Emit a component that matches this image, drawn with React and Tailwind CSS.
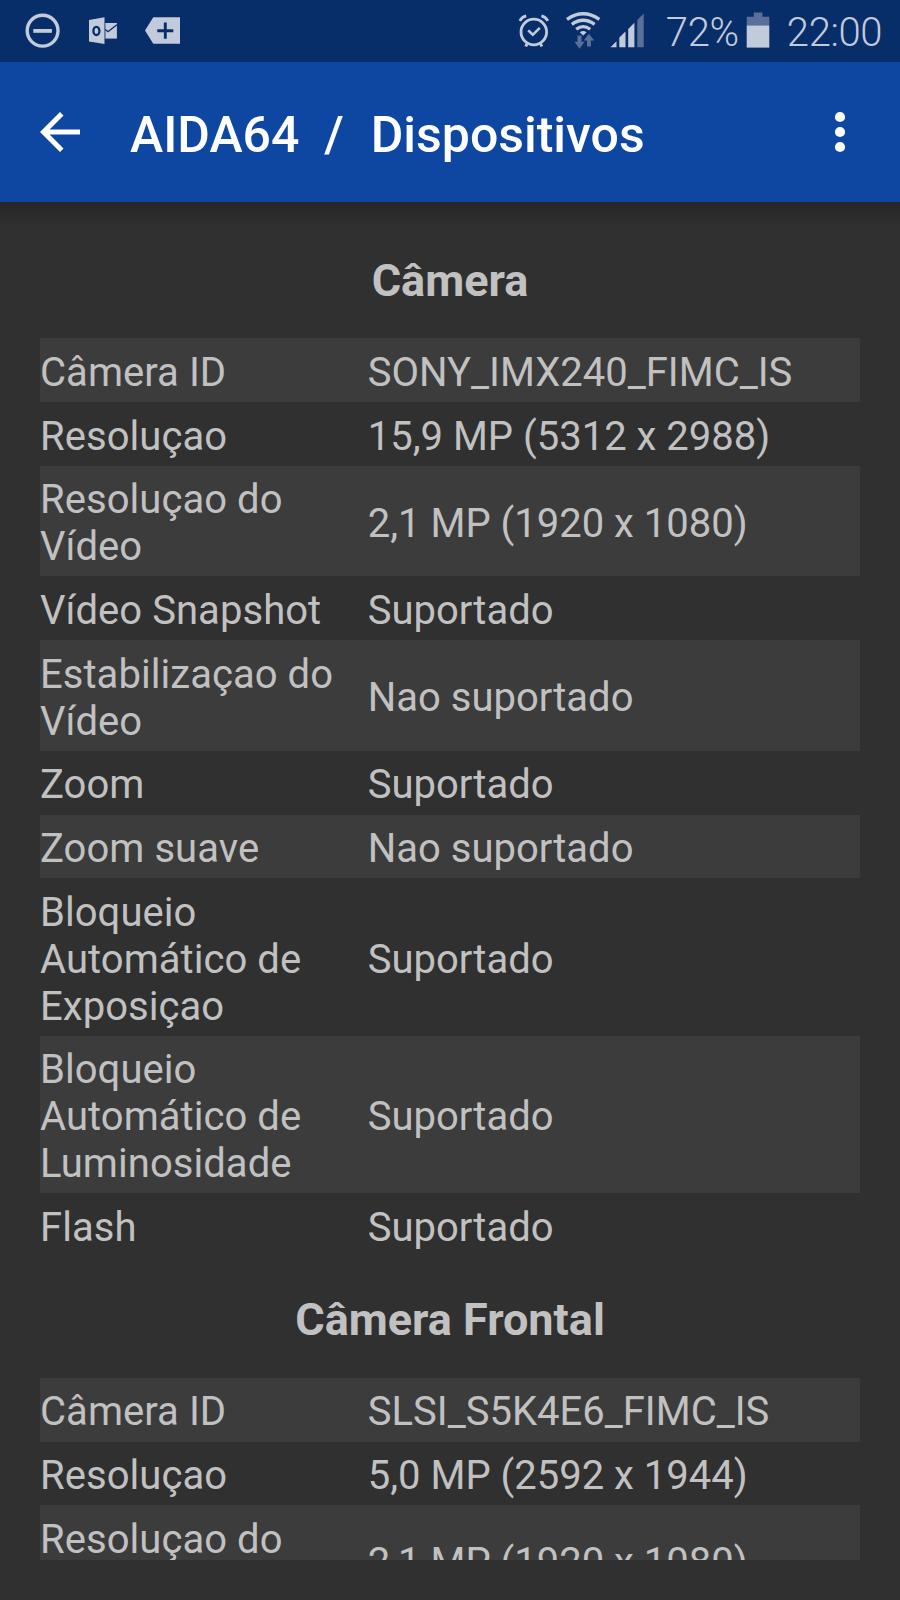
const sections = [
  {
    title: "Câmera",
    heading: "h-[112px] pt-[28.6px]",
    rows: [
      ["Câmera ID", "SONY_IMX240_FIMC_IS"],
      ["Resoluçao", "15,9 MP (5312 x 2988)"],
      ["Resoluçao do Vídeo", "2,1 MP (1920 x 1080)"],
      ["Vídeo Snapshot", "Suportado"],
      ["Estabilizaçao do Vídeo", "Nao suportado"],
      ["Zoom", "Suportado"],
      ["Zoom suave", "Nao suportado"],
      ["Bloqueio Automático de Exposiçao", "Suportado"],
      ["Bloqueio Automático de Luminosidade", "Suportado"],
      ["Flash", "Suportado"],
    ],
  },
  {
    title: "Câmera Frontal",
    heading: "h-[120.8px] pt-[37px]",
    rows: [
      ["Câmera ID", "SLSI_S5K4E6_FIMC_IS"],
      ["Resoluçao", "5,0 MP (2592 x 1944)"],
      ["Resoluçao do Vídeo", "2,1 MP (1920 x 1080)"],
    ],
  },
];

const NotificationIcons = () => (
  <svg width="200" height="62" viewBox="0 0 200 62" className="shrink-0">
    {/* do not disturb */}
    <circle cx="42.6" cy="30.7" r="15.4" fill="none" stroke="#c2cbdb" strokeWidth="3.4" />
    <rect x="33.3" y="29" width="18.6" height="3.8" fill="#c2cbdb" />

    {/* outlook */}
    <path d="M89 20l15.5-2.8v26.8L89 41.4z" fill="#c2cbdb" />
    <ellipse cx="96.4" cy="30.9" rx="3" ry="4.1" fill="none" stroke="#082e69" strokeWidth="2.3" />
    <path d="M105.4 23h11.5v15.6h-11.5z" fill="#c2cbdb" />
    <path d="M105.4 29.5l2.6 2.2 8.9-6.9" fill="none" stroke="#082e69" strokeWidth="1.4" />

    {/* tag with plus */}
    <path d="M153.3 17.3H180v26.5h-26.7L145 30.6z" fill="#c2cbdb" />
    <path d="M157.3 30.7h16M165.3 22.5v16.3" fill="none" stroke="#082e69" strokeWidth="2.9" />
  </svg>
);

const SystemIcons = () => (
  <svg width="130" height="62" viewBox="516 0 130 62" className="shrink-0">
    {/* alarm */}
    <g fill="none" stroke="#c2cbdb">
      <circle cx="533.8" cy="32" r="12.8" strokeWidth="2.8" />
      <path d="M519.8 20.9q2-4 6.4-5M547.8 20.9q-2-4-6.4-5" strokeWidth="2.8" />
      <path d="M527.6 42.5l-1.8 4M540 42.5l1.8 4" strokeWidth="3" />
      <path d="M528.2 30.4l4.6 4.4 7-7" strokeWidth="2.6" />
    </g>

    {/* wifi */}
    <g fill="none" stroke="#c2cbdb" strokeWidth="3.3">
      <path d="M567 19.3Q583.2 8.2 599.4 19.3" />
      <path d="M571.8 24.4Q583.2 16.2 594.6 24.4" />
      <path d="M576.2 29.2Q583.2 24 590.2 29.2" />
    </g>
    <path d="M579.8 32.2q3.4-2.4 6.8 0l-3.4 3.4z" fill="#c2cbdb" />
    <path d="M577.5 35.5h4v6.3h3l-5 7-5-7h3z" fill="#5a7099" />
    <path d="M587 46.5v-6h-3.2l5.1-6.8 5.3 6.8h-3.3v6z" fill="#5a7099" />

    {/* signal */}
    <path d="M610.5 47.3l6-6v6zM619.3 47.3v-9.7l6.2-6v15.7zM628.2 47.3V29l6.2-6.2v24.5z" fill="#c2cbdb" />
    <path d="M637.3 47.3V20l6.4-6.6v33.9z" fill="#5a7099" />
  </svg>
);

const BatteryIcon = () => (
  <svg width="24" height="62" viewBox="0 0 24 62" className="ml-[7px] shrink-0">
    <path d="M.7 26v-9.2h7.1v-4.3h8.6v4.3h6.9V26z" fill="#5a7099" />
    <path d="M.7 25.6h22.6v22H.7z" fill="#c2cbdb" />
  </svg>
);

const StatusBar = () => (
  <div className="flex h-[62.4px] shrink-0 items-center justify-between bg-[#082e69]">
    <NotificationIcons />
    <div className="flex items-center pr-[18px] text-[40px] leading-[60px] font-light text-[#c2cbdb]">
      <SystemIcons />
      <span className="ml-[20px] pt-[4px] tracking-[-0.3px]">72%</span>
      <BatteryIcon />
      <span className="ml-[17px] pt-[4px] tracking-[-0.4px]">22:00</span>
    </div>
  </div>
);

const Toolbar = () => (
  <div className="flex h-[140px] shrink-0 items-center bg-[#0d47a1] pr-[50px] pl-[40px] text-white">
    <svg width="40" height="40" viewBox="0 0 40 40">
      <path d="M40 17.5v5H9.6L23.5 36.4 20 40 0 20 20 0l3.5 3.6L9.6 17.5z" fill="currentColor" />
    </svg>
    <h1 className="ml-[50px] flex-1 pt-[5px] text-[50px] leading-none font-medium whitespace-pre">
      AIDA64  /  <span className="ml-[2px]">Dispositivos</span>
    </h1>
    <svg width="20" height="42" viewBox="0 0 20 42" fill="currentColor">
      <circle cx="10" cy="6" r="5.1" />
      <circle cx="10" cy="21" r="5.1" />
      <circle cx="10" cy="36" r="5.1" />
    </svg>
  </div>
);

const Row = ({ label, value, striped }) => (
  <div
    className={`grid grid-cols-[2fr_3fr] items-center pt-[11.6px] pb-[5.275px] ${
      striped ? "bg-[#3c3c3c]" : ""
    }`}
  >
    <div className="tracking-[0.05px]">{label}</div>
    <div className="-ml-[0.3px] whitespace-nowrap">{value}</div>
  </div>
);

export default function App() {
  return (
    <div className="flex h-[1600px] w-[900px] flex-col overflow-hidden bg-[#303030] pb-[40px] font-['Roboto',sans-serif]">
      <StatusBar />
      <Toolbar />
      <div className="h-[24px] shrink-0 bg-linear-to-b from-[#262626] to-[#303030]" />

      <main className="min-h-0 flex-1 overflow-hidden px-[40px] text-[40px] leading-[46.875px] text-[#c1c1c1]">
        {sections.map((section) => (
          <section key={section.title}>
            <h2 className={`text-center text-[45px] leading-[52px] font-bold ${section.heading}`}>
              {section.title}
            </h2>
            {section.rows.map(([label, value], i) => (
              <Row key={label} label={label} value={value} striped={i % 2 === 0} />
            ))}
          </section>
        ))}
      </main>
    </div>
  );
}
